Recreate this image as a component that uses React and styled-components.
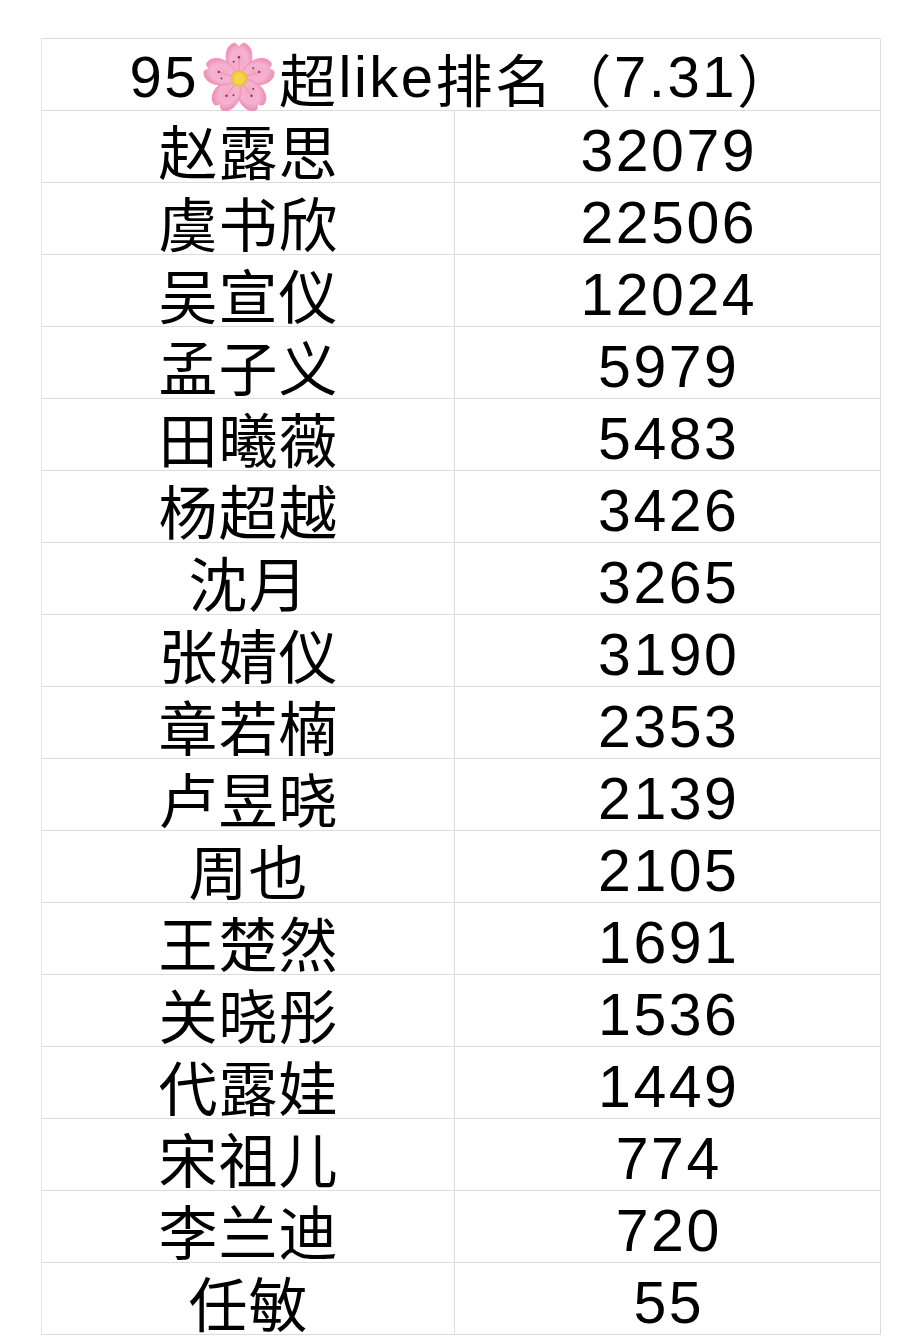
import React from "react";
import styled, { createGlobalStyle } from "styled-components";

const GlobalStyle = createGlobalStyle`
  html, body {
    margin: 0;
    padding: 0;
    background: #ffffff;
  }
  body {
    font-family: "Liberation Sans", "Noto Sans CJK SC", sans-serif;
  }
`;

const Page = styled.div`
  width: 915px;
  height: 1341px;
  padding: 38px 0 0 41px;
  box-sizing: border-box;
  background: #fff;
`;

const Table = styled.div`
  width: 839px;
  display: grid;
  grid-template-columns: 413px 426px;
  border-top: 1px solid #dcdcdc;
  border-left: 1px solid #e4e4e4;
  box-sizing: border-box;
`;

const Cell = styled.div`
  height: 72px;
  box-sizing: border-box;
  border-right: 1px solid #dcdcdc;
  border-bottom: 1px solid #dcdcdc;
  display: flex;
  align-items: center;
  justify-content: center;
  color: #000;
  white-space: nowrap;
`;

const NameText = styled.div`
  font-family: "Noto Sans CJK SC", sans-serif;
  font-size: 59px;
  line-height: 58px;
  letter-spacing: 1px;
  margin-left: 1px;
  margin-top: 6px;
`;

const NumText = styled.div`
  font-family: "Liberation Sans", sans-serif;
  font-size: 59px;
  line-height: 58px;
  letter-spacing: 2.5px;
  margin-left: 2.5px;
  margin-top: 8px;
`;

const TitleCell = styled(Cell)`
  grid-column: 1 / span 2;
  padding-left: 4px;
`;

const TitleText = styled.div`
  display: flex;
  align-items: center;
  font-family: "Noto Sans CJK SC", sans-serif;
  font-size: 57px;
  line-height: 58px;
  letter-spacing: 2.5px;
  margin-top: 4px;
`;

const Latin = styled.span`
  font-family: "Liberation Sans", sans-serif;
  font-size: 58px;
`;

const Flower = () => (
  <svg width="76" height="76" viewBox="0 0 100 100" style={{ margin: "0 2px", flex: "none" }}>
    <defs>
      <radialGradient id="pet" cx="50%" cy="50%" r="55%">
        <stop offset="0%" stopColor="#f7a8c8" />
        <stop offset="60%" stopColor="#f4b3cf" />
        <stop offset="100%" stopColor="#f08bb6" />
      </radialGradient>
      <radialGradient id="ctr" cx="50%" cy="50%" r="50%">
        <stop offset="0%" stopColor="#fff27a" />
        <stop offset="100%" stopColor="#e9b93a" />
      </radialGradient>
    </defs>
    {[0, 72, 144, 216, 288].map((a) => (
      <g key={a} transform={`rotate(${a} 50 52)`}>
        <path
          d="M50 52 C30 40 28 12 42 6 C46 4 48 8 50 11 C52 8 54 4 58 6 C72 12 70 40 50 52 Z"
          fill="url(#pet)"
          stroke="#ee8fb7"
          strokeWidth="1"
        />
        <line x1="50" y1="44" x2="50" y2="26" stroke="#e48bb0" strokeWidth="1" />
        <circle cx="50" cy="24" r="1.6" fill="#7a3a55" />
        <circle cx="43" cy="30" r="1.3" fill="#7a3a55" />
      </g>
    ))}
    <circle cx="50" cy="52" r="11" fill="url(#ctr)" />
    <circle cx="50" cy="52" r="6" fill="#f6d54a" />
  </svg>
);

const rows = [
  ["赵露思", "32079"],
  ["虞书欣", "22506"],
  ["吴宣仪", "12024"],
  ["孟子义", "5979"],
  ["田曦薇", "5483"],
  ["杨超越", "3426"],
  ["沈月", "3265"],
  ["张婧仪", "3190"],
  ["章若楠", "2353"],
  ["卢昱晓", "2139"],
  ["周也", "2105"],
  ["王楚然", "1691"],
  ["关晓彤", "1536"],
  ["代露娃", "1449"],
  ["宋祖儿", "774"],
  ["李兰迪", "720"],
  ["任敏", "55"],
];

export default function App() {
  return (
    <>
      <GlobalStyle />
      <Page>
        <Table>
          <TitleCell>
            <TitleText>
              <Latin>95</Latin>
              <Flower />
              超<Latin>like</Latin>排名（<Latin>7.31</Latin>）
            </TitleText>
          </TitleCell>
          {rows.map(([name, n]) => (
            <React.Fragment key={name}>
              <Cell>
                <NameText>{name}</NameText>
              </Cell>
              <Cell>
                <NumText>{n}</NumText>
              </Cell>
            </React.Fragment>
          ))}
        </Table>
      </Page>
    </>
  );
}
